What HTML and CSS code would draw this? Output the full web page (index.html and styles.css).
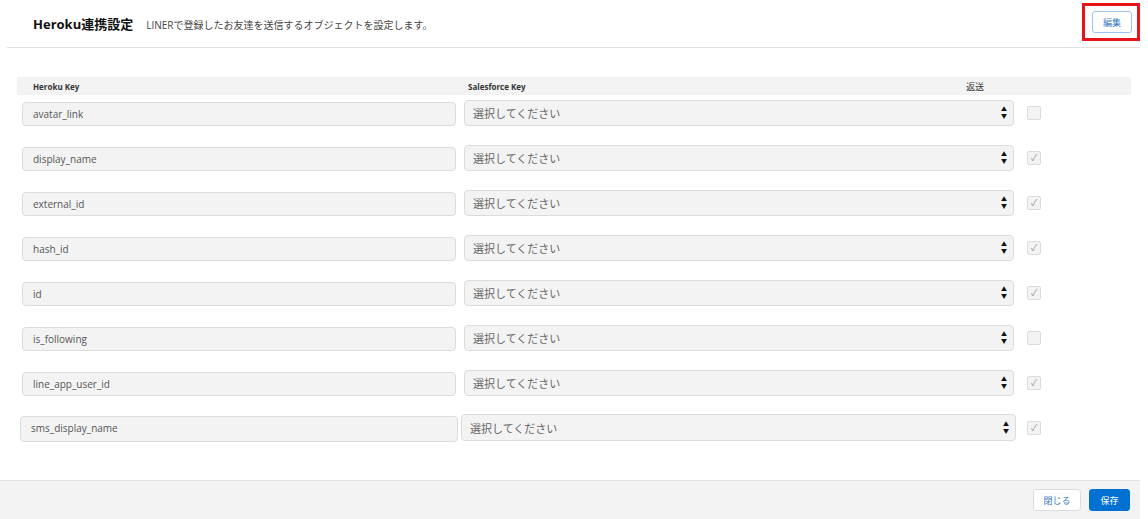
FILE: index.html
```html
<!DOCTYPE html>
<html lang="ja">
<head>
    <meta charset="UTF-8">
    <meta name="viewport" content="width=device-width, initial-scale=1.0">
    <title>Heroku連携設定</title>
    <link rel="stylesheet" href="styles.css">
</head>
<body>
    <div class="page">
        <div class="header">
            <h1>Heroku連携設定</h1>
            <p class="subtitle">LINERで登録したお友達を送信するオブジェクトを設定します。</p>
            <span class="highlight"><button class="btn-edit">編集</button></span>
        </div>

        <div class="mapping">
            <div class="table-head">
                <span class="col-heroku">Heroku Key</span>
                <span class="col-sf">Salesforce Key</span>
                <span class="col-send">返送</span>
            </div>

            <div class="row">
                <div class="key">avatar_link</div>
                <div class="select">選択してください<span class="arrows">▲<br>▼</span></div>
                <span class="check"></span>
            </div>
            <div class="row">
                <div class="key">display_name</div>
                <div class="select">選択してください<span class="arrows">▲<br>▼</span></div>
                <span class="check checked">✓</span>
            </div>
            <div class="row">
                <div class="key">external_id</div>
                <div class="select">選択してください<span class="arrows">▲<br>▼</span></div>
                <span class="check checked">✓</span>
            </div>
            <div class="row">
                <div class="key">hash_id</div>
                <div class="select">選択してください<span class="arrows">▲<br>▼</span></div>
                <span class="check checked">✓</span>
            </div>
            <div class="row">
                <div class="key">id</div>
                <div class="select">選択してください<span class="arrows">▲<br>▼</span></div>
                <span class="check checked">✓</span>
            </div>
            <div class="row">
                <div class="key">is_following</div>
                <div class="select">選択してください<span class="arrows">▲<br>▼</span></div>
                <span class="check"></span>
            </div>
            <div class="row">
                <div class="key">line_app_user_id</div>
                <div class="select">選択してください<span class="arrows">▲<br>▼</span></div>
                <span class="check checked">✓</span>
            </div>
            <div class="row last">
                <div class="key">sms_display_name</div>
                <div class="select">選択してください<span class="arrows">▲<br>▼</span></div>
                <span class="check checked">✓</span>
            </div>
        </div>

        <div class="footer">
            <button class="btn-close">閉じる</button>
            <button class="btn-save">保存</button>
        </div>
    </div>
</body>
</html>
```

FILE: styles.css
```css
body {
    margin: 0;
    background: #ffffff;
    font-family: "Open Sans", "Noto Sans CJK JP", sans-serif;
    color: #333;
}

.page {
    width: 1140px;
    height: 519px;
    display: flex;
    flex-direction: column;
}

.header {
    height: 48px;
    margin-left: 7px;
    border-bottom: 1px solid #e2e2e2;
    display: flex;
    align-items: center;
    box-sizing: border-box;
    padding-left: 26px;
    padding-top: 2px;
}

h1 {
    margin: 0 0 2px 0;
    font-size: 13px;
    font-weight: bold;
    color: #111;
}

.subtitle {
    margin: 0 0 0 13px;
    font-size: 10px;
    color: #444;
}

.highlight {
    margin-left: auto;
    border: 3px solid #e8131b;
    padding: 5px 5px 5px 7px;
    margin-top: -5px;
}

.btn-edit {
    display: block;
    width: 40px;
    height: 22px;
    padding: 0;
    border: 1px solid #9cc3ee;
    border-radius: 3px;
    background: #fff;
    color: #3a78c4;
    font-size: 9px;
    font-family: inherit;
}

.mapping {
    flex: 1;
    padding: 29px 0 0 17px;
}

.table-head {
    width: 1114px;
    height: 18px;
    background: #f3f3f3;
    display: flex;
    align-items: center;
    font-size: 8px;
    font-weight: bold;
    color: #333;
}

.col-heroku {
    width: 431px;
    padding-left: 16px;
}

.col-sf {
    width: 498px;
    padding-left: 4px;
}

.col-send {
    font-weight: normal;
    font-size: 9px;
}

.row {
    display: flex;
    align-items: center;
    height: 45px;
    margin-top: -5px;
    margin-bottom: 5px;
}

.row:first-of-type {
    margin-top: 0;
}

.key {
    margin-left: 5px;
    width: 434px;
    height: 24px;
    box-sizing: border-box;
    border: 1px solid #dcdcdc;
    border-radius: 4px;
    background: #f3f3f3;
    font-size: 10px;
    color: #555;
    padding-left: 10px;
    line-height: 22px;
    margin-top: 3px;
}

.select {
    margin-left: 8px;
    width: 550px;
    height: 26px;
    box-sizing: border-box;
    border: 1px solid #dcdcdc;
    border-radius: 4px;
    background: #f3f3f3;
    font-size: 11px;
    color: #666;
    padding-left: 8px;
    display: flex;
    align-items: center;
}

.arrows {
    margin-left: auto;
    margin-right: 6px;
    font-size: 6px;
    line-height: 7px;
    color: #111;
    text-align: center;
}

.check {
    margin-left: 13px;
    width: 14px;
    height: 14px;
    box-sizing: border-box;
    border: 1px solid #dcdcdc;
    border-radius: 2px;
    background: #f3f3f3;
    font-size: 9px;
    line-height: 12px;
    text-align: center;
    color: #999;
}

.row.last .key {
    margin-left: 3px;
    width: 438px;
    height: 26px;
}

.row.last .select {
    margin-left: 3px;
    width: 555px;
    height: 27px;
}

.row.last .check {
    margin-left: 11px;
}

.footer {
    height: 39px;
    background: #f3f3f3;
    border-top: 1px solid #e2e2e2;
    box-sizing: border-box;
    display: flex;
    align-items: center;
    justify-content: flex-end;
    padding-right: 10px;
    gap: 8px;
}

.footer button {
    height: 22px;
    padding: 0;
    border-radius: 3px;
    font-size: 9px;
    font-family: inherit;
}

.btn-close {
    width: 48px;
    border: 1px solid #dcdcdc;
    background: #fff;
    color: #3a78c4;
}

.btn-save {
    width: 41px;
    border: 1px solid #0070d2;
    background: #0070d2;
    color: #fff;
}
```
